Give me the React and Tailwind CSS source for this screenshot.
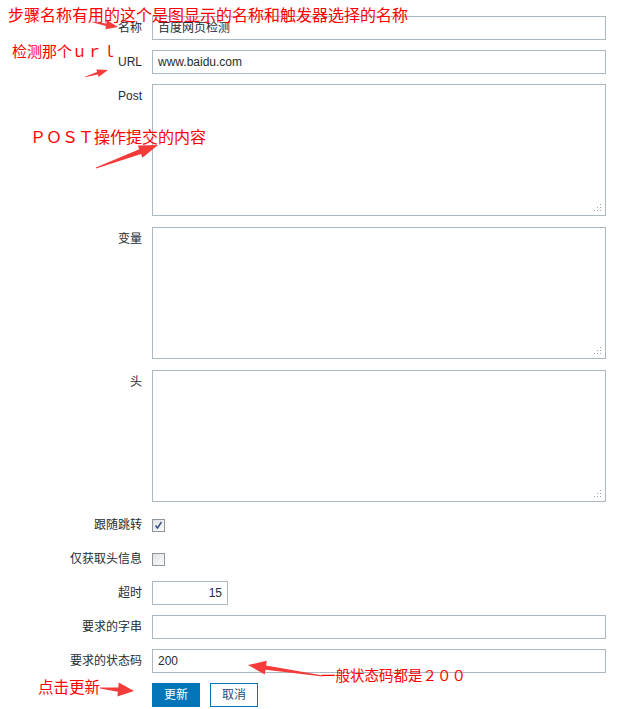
import React from "react";

function arrowPoints(tx, ty, hx, hy, headLen, headHalf, neckHalf, tailHalf) {
  const dx = hx - tx;
  const dy = hy - ty;
  const len = Math.sqrt(dx * dx + dy * dy);
  const ux = dx / len;
  const uy = dy / len;
  const nx = -uy;
  const ny = ux;
  const bx = hx - ux * headLen;
  const by = hy - uy * headLen;
  const pts = [
    [tx + nx * tailHalf, ty + ny * tailHalf],
    [bx + nx * neckHalf, by + ny * neckHalf],
    [bx + nx * headHalf, by + ny * headHalf],
    [hx, hy],
    [bx - nx * headHalf, by - ny * headHalf],
    [bx - nx * neckHalf, by - ny * neckHalf],
    [tx - nx * tailHalf, ty - ny * tailHalf],
  ];
  return pts.map((p) => p[0].toFixed(1) + "," + p[1].toFixed(1)).join(" ");
}

const arrows = [
  [92, 22, 118, 27, 12, 4.5, 1.4, 0.3],
  [85, 77, 108, 70, 11, 4, 1.4, 0.3],
  [96, 168, 158, 145, 19, 6.5, 2.5, 0.4],
  [323, 676, 248, 665, 18, 7, 2.2, 0.4],
  [100, 688, 134, 691, 16, 7, 2.2, 0.4],
];

function Label({ children }) {
  return (
    <div className="w-[142px] shrink-0 text-right pt-[5px] leading-[14px] text-[12px] text-[#1f2c33]">
      {children}
    </div>
  );
}

function Row({ label, children }) {
  return (
    <div className="flex items-start">
      <Label>{label}</Label>
      <div className="ml-[10px]">{children}</div>
    </div>
  );
}

function TextInput({ value, w = "w-[454px]", right = false }) {
  return (
    <div
      className={`h-[24px] ${w} border border-[#acb8c0] bg-white px-[5px] flex items-center text-[12px] text-[#1f2c33] ${
        right ? "justify-end" : ""
      }`}
    >
      {value}
    </div>
  );
}

function Grip() {
  return (
    <svg className="absolute right-[3px] bottom-[3px]" width="8" height="8" viewBox="0 0 8 8">
      <rect x="6" y="0" width="1" height="1" fill="#9aa5ad" />
      <rect x="3" y="3" width="1" height="1" fill="#9aa5ad" />
      <rect x="6" y="3" width="1" height="1" fill="#9aa5ad" />
      <rect x="0" y="6" width="1" height="1" fill="#9aa5ad" />
      <rect x="3" y="6" width="1" height="1" fill="#9aa5ad" />
      <rect x="6" y="6" width="1" height="1" fill="#9aa5ad" />
    </svg>
  );
}

function TextArea() {
  return (
    <div className="relative h-[132px] mb-[1px] w-[454px] border border-[#acb8c0] bg-white">
      <Grip />
    </div>
  );
}

function Checkbox({ checked }) {
  return (
    <div className="h-[24px] pt-[6px]">
      <div className="relative w-[13px] h-[13px] border border-[#8e959b] bg-gradient-to-br from-[#dfe2e5] to-[#fbfbfb]">
        {checked && (
          <svg className="absolute left-[1px] top-[1px]" width="9" height="9" viewBox="0 0 9 9">
            <path d="M1.5 4.5 L3.5 7 L7.5 1" stroke="#344a86" strokeWidth="1.4" fill="none" />
          </svg>
        )}
      </div>
    </div>
  );
}

export default function App() {
  return (
    <div className="relative w-[625px] h-[709px] overflow-hidden bg-white font-['Liberation_Sans','Noto_Sans_CJK_SC',sans-serif]">
      <div className="pt-[16px] flex flex-col gap-[10px]">
        <Row label="名称">
          <TextInput value="百度网页检测" />
        </Row>
        <Row label="URL">
          <TextInput value="www.baidu.com" />
        </Row>
        <Row label="Post">
          <TextArea />
        </Row>
        <Row label="变量">
          <TextArea />
        </Row>
        <Row label="头">
          <TextArea />
        </Row>
        <Row label="跟随跳转">
          <Checkbox checked />
        </Row>
        <Row label="仅获取头信息">
          <Checkbox />
        </Row>
        <Row label="超时">
          <TextInput value="15" w="w-[76px]" right />
        </Row>
        <Row label="要求的字串">
          <TextInput value="" />
        </Row>
        <Row label="要求的状态码">
          <TextInput value="200" />
        </Row>
        <div className="flex items-start">
          <div className="w-[142px] shrink-0" />
          <div className="ml-[10px] flex gap-[10px]">
            <div className="h-[24px] w-[48px] bg-[#0275b8] text-white text-[12px] flex items-center justify-center">
              更新
            </div>
            <div className="h-[24px] w-[48px] bg-white border border-[#0275b8] text-[#1d4f7c] text-[12px] flex items-center justify-center">
              取消
            </div>
          </div>
        </div>
      </div>

      <div className="absolute left-[8px] top-[6px] text-[16px] leading-[16px] text-[#ff0000] font-['Noto_Sans_CJK_SC',sans-serif] whitespace-nowrap">
        步骤名称有用的这个是图显示的名称和触发器选择的名称
      </div>
      <div className="absolute left-[12px] top-[43px] text-[15px] leading-[15px] text-[#ff0000] font-['Noto_Sans_CJK_SC',sans-serif] whitespace-nowrap">
        检测那个ｕｒｌ
      </div>
      <div className="absolute left-[30px] top-[128px] text-[16px] leading-[16px] text-[#ff0000] font-['Noto_Sans_CJK_SC',sans-serif] whitespace-nowrap">
        ＰＯＳＴ操作提交的内容
      </div>
      <div className="absolute left-[321px] top-[667px] text-[14.5px] leading-[16px] text-[#ff0000] font-['Noto_Sans_CJK_SC',sans-serif] whitespace-nowrap">
        一般状态码都是２００
      </div>
      <div className="absolute left-[38px] top-[678px] text-[15.5px] leading-[16px] text-[#ff0000] font-['Noto_Sans_CJK_SC',sans-serif] whitespace-nowrap">
        点击更新
      </div>

      <svg className="absolute inset-0 pointer-events-none" width="625" height="709" viewBox="0 0 625 709">
        {arrows.map((a, i) => (
          <polygon key={i} points={arrowPoints(...a)} fill="#f53a3a" />
        ))}
      </svg>
    </div>
  );
}
